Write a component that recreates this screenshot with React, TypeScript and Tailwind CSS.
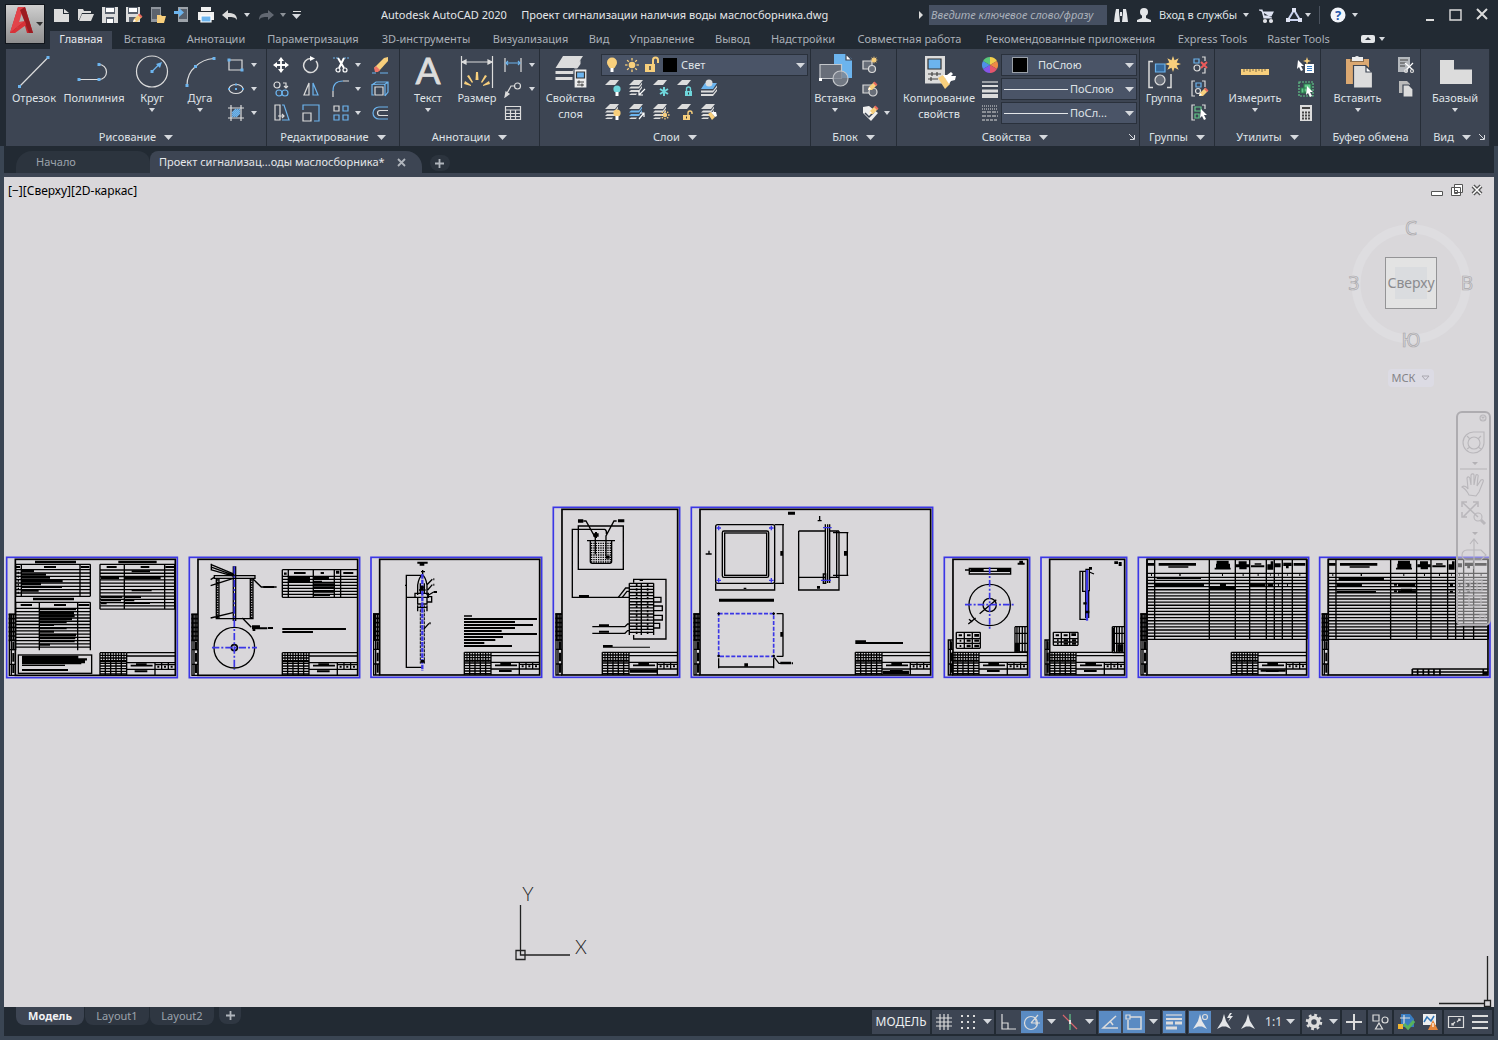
import type { ReactNode } from 'react'

type BarRow = [number, number, number, number?]

const BLUE = '#6cb4ee'
const PAPER = '#dcdcdc'
const GOLD = '#f8cf7c'
const SHEET_BLUE = '#3b36e6'

/* ---------- small shared pieces ---------- */

function Caret({ big = false }: { big?: boolean }) {
  return (
    <svg className="shrink-0" width={big ? 9 : 6} height={big ? 5 : 4} viewBox="0 0 8 4" fill="#d6d9de" preserveAspectRatio="none">
      <path d="M0 0h8L4 4z" />
    </svg>
  )
}

function Ico({ children, size = 18, box = 18 }: { children: ReactNode; size?: number; box?: number }) {
  return (
    <svg className="shrink-0" width={size} height={size} viewBox={`0 0 ${box} ${box}`} fill="none" stroke={PAPER} strokeWidth="1.2">
      {children}
    </svg>
  )
}

function Dots({ pts, r = 3 }: { pts: number[][]; r?: number }) {
  return (
    <>
      {pts.map(([x, y], i) => (
        <rect key={i} x={x - r / 2} y={y - r / 2} width={r} height={r} fill={BLUE} stroke="none" />
      ))}
    </>
  )
}

function Sun({ x, y, r }: { x: number; y: number; r: number }) {
  return (
    <g stroke={GOLD} strokeWidth="1.3">
      <circle cx={x} cy={y} r={r * 0.55} fill={GOLD} stroke="none" />
      {[0, 45, 90, 135, 180, 225, 270, 315].map(a => (
        <path key={a} d={`M${x} ${y - r * 0.75}V${y - r * 1.15}`} transform={`rotate(${a} ${x} ${y})`} />
      ))}
    </g>
  )
}

function Star({ x, y, r }: { x: number; y: number; r: number }) {
  const pts = Array.from({ length: 16 }).map((_, i) => {
    const rad = i % 2 ? r * 0.5 : r
    const a = (i * Math.PI) / 8
    return `${x + rad * Math.sin(a)},${y - rad * Math.cos(a)}`
  })
  return <polygon points={pts.join(' ')} fill={GOLD} stroke="none" />
}

function Pencil({ x, y }: { x: number; y: number }) {
  return (
    <g stroke="none" transform={`translate(${x} ${y})`}>
      <path d="M0 8l1-3 5-5 3 3-5 5z" fill={GOLD} />
      <path d="M5 1l1.500-1.500 3 3L8 4z" fill="#e8695f" />
      <path d="M0 8l1-3 2 2z" fill="#fff" />
    </g>
  )
}

function Lock({ x, y, color, open = false }: { x: number; y: number; color: string; open?: boolean }) {
  return (
    <g>
      <rect x={x} y={y + 4} width="7" height="5" fill={color} stroke="none" />
      <path d={open ? `M${x + 5} ${y + 4}V${y + 2}a2 2 0 0 1 4 0v1` : `M${x + 1.5} ${y + 4}V${y + 2}a2 2 0 0 1 4 0v2`} stroke={color} strokeWidth="1.400" />
      <path d={`M${x + 3.5} ${y + 5.5}v2`} stroke="#333" strokeWidth="1" />
    </g>
  )
}

function Bulb({ x, y, color }: { x: number; y: number; color: string }) {
  return (
    <g stroke="none">
      <circle cx={x} cy={y} r="3.600" fill={color} />
      <rect x={x - 1.5} y={y + 3} width="3" height="4" fill="#fff" />
    </g>
  )
}

function Pointer({ x, y }: { x: number; y: number }) {
  return <path d={`M${x} ${y}l6 6h-3l2 4-2 1-2-4-2 2z`} fill="#fff" stroke="none" />
}

function Layers({ n = 3, mid = PAPER }: { n?: number; mid?: string }) {
  return (
    <g stroke="none">
      <path d="M6 1h9l-4 5H1z" fill={PAPER} />
      {n > 1 && <path d="M3 7.500h8l3-4v2L11 9.500H1z" fill={mid} />}
      {n > 2 && <path d="M3 11h8l3-4v2L11 13H1z" fill={mid} />}
      {n > 2 && <path d="M3 14.500h6l-1 1.500H1z" fill={PAPER} />}
    </g>
  )
}

/* ---------- ribbon building blocks ---------- */

function Big({ label, width, caret, children }: { label: ReactNode; width: string; caret?: boolean; children: ReactNode }) {
  return (
    <button className={`flex shrink-0 flex-col items-center pt-[5px] ${width}`}>
      <svg className="overflow-visible" width="36" height="36" viewBox="0 0 36 36" fill="none" stroke={PAPER} strokeWidth="1.200">{children}</svg>
      <span className="whitespace-nowrap leading-4">{label}</span>
      {caret && <span className="mt-0.5"><Caret /></span>}
    </button>
  )
}

function Stack({ width, children }: { width: string; children: ReactNode }) {
  return <div className={`grid shrink-0 auto-rows-[24px] content-start justify-items-center pt-1 ${width}`}>{children}</div>
}

function Tool({ name, children }: { name: string; children: ReactNode }) {
  return (
    <button aria-label={name} className="flex h-6 items-center justify-center">
      <Ico>{children}</Ico>
    </button>
  )
}

function Drop({ name }: { name: string }) {
  return (
    <button aria-label={name} className="flex h-6 items-center">
      <Caret />
    </button>
  )
}

function Panel({ title, width, caret = true, launcher, children }: { title: string; width: string; caret?: boolean; launcher?: boolean; children: ReactNode }) {
  return (
    <section className={`flex grow flex-col border-r border-[#262d37] bg-[#3d4553] ${width}`}>
      <div className="flex h-[79px]">{children}</div>
      <div className="flex h-[18px] items-center px-1">
        <button className="flex grow items-center justify-center gap-2 whitespace-nowrap leading-4">
          {title}
          {caret && <Caret big />}
        </button>
        {launcher && (
          <button aria-label={`${title}: параметры`}>
            <svg width="6" height="6" viewBox="0 0 6 6" stroke="#d6d9de" fill="none"><path d="M0 0l5 5M5.500 1v4.500H1" /></svg>
          </button>
        )}
      </div>
    </section>
  )
}

function QuickIcon({ name, width, children }: { name: string; width: string; children: ReactNode }) {
  return (
    <button aria-label={name} className={`flex shrink-0 justify-center ${width}`}>
      <Ico>{children}</Ico>
    </button>
  )
}

const MENU: [string, string][] = [
  ['Вставка', 'w-[65px]'],
  ['Аннотации', 'w-[78px]'],
  ['Параметризация', 'w-[116px]'],
  ['3D-инструменты', 'w-[110px]'],
  ['Визуализация', 'w-[99px]'],
  ['Вид', 'w-[38px]'],
  ['Управление', 'w-[88px]'],
  ['Вывод', 'w-[53px]'],
  ['Надстройки', 'w-[88px]'],
  ['Совместная работа', 'w-[125px]'],
  ['Рекомендованные приложения', 'w-[197px]'],
  ['Express Tools', 'w-[87px]'],
  ['Raster Tools', 'w-[85px]'],
]

function Header() {
  return (
    <header className="flex h-[49px] pl-[5px]">
      <button aria-label="Меню приложения" className="mt-1 flex h-10 w-10 shrink-0 items-center border border-[#11161c] bg-gradient-to-b from-[#cfcfcf] to-[#8f8f8f]">
        <svg width="38" height="38" viewBox="0 0 38 38">
          <path d="M4 28l8-26h7l8 26h-6l-2-7-8 1-2 6z" fill="#c4272d" />
          <path d="M12 2h7l-6 15 6-1-8 6-7 6z" fill="#e2444a" />
          <path d="M16 8l3 8-6 1z" fill="#b5b5b5" />
          <path d="M19 2l8 26h-4L14 5z" fill="#9c1b21" />
          <path d="M4 28l15-12 1 4-11 8z" fill="#d83238" />
          <path d="M30 17h7l-3 4z" fill="#333" />
        </svg>
      </button>
      <div className="flex min-w-0 grow flex-col">
        <div className="flex h-[31px] items-center pb-0.5">
          <div className="flex w-[336px] shrink-0 items-center pl-[5px]">
            <QuickIcon name="Создать" width="w-6"><path d="M1 3h9v5h6v8H1zM11 3l5 4h-5z" fill={PAPER} stroke="none" /></QuickIcon>
            <QuickIcon name="Открыть" width="w-6"><path d="M1 3h5l1 2h7v2H5L2 14H1zM5 8h12l-3 7H2z" fill={PAPER} stroke="none" /></QuickIcon>
            <QuickIcon name="Сохранить" width="w-6">
              <path d="M1 1h16v16H1z" fill={PAPER} stroke="none" /><path d="M4 1h10v7H4zM5 11h8v6H5z" fill="#59616d" stroke="none" /><path d="M5 2h8v4H5zM6 13h6v4H6z" fill="#fff" stroke="none" />
            </QuickIcon>
            <QuickIcon name="Сохранить как" width="w-6">
              <path d="M1 1h14v15H1z" fill={PAPER} stroke="none" /><path d="M3 1h10v7H3zM4 11h7v5H4z" fill="#59616d" stroke="none" /><path d="M4 2h8v4H4z" fill="#fff" stroke="none" /><Pencil x={8} y={8} />
            </QuickIcon>
            <QuickIcon name="Открыть из веб" width="w-6">
              <path d="M2 1h10v15H2z" fill="#8e949c" stroke="none" /><path d="M3 3h8v10H3z" fill="#5c636e" stroke="none" /><path d="M8 9h4l1 1h4l-2 7H8z" fill={GOLD} stroke="none" />
            </QuickIcon>
            <QuickIcon name="Сохранить в веб" width="w-6">
              <path d="M5 1h10v15H5z" fill="#9da3aa" stroke="none" /><path d="M6 3h8v10H6z" fill="#59616d" stroke="none" /><path d="M1 5h5V2l5 4.500L6 11V8H1z" fill={BLUE} stroke="none" />
            </QuickIcon>
            <QuickIcon name="Печать" width="w-6">
              <path d="M1 6h16v8H1zM4 1h10v4H4z" fill="#f0f0f0" stroke="none" /><path d="M4 10h10v6H4z" fill={BLUE} stroke="#fff" />
            </QuickIcon>
            <QuickIcon name="Отменить" width="w-6"><path d="M1 9l6-5v3c5 0 9 1 9 7-2-3-4-3-9-3v3z" fill={PAPER} stroke="none" /></QuickIcon>
            <button aria-label="Список отмены" className="w-3 pl-0.5"><Caret /></button>
            <QuickIcon name="Повторить" width="w-6"><path d="M17 9l-6-5v3c-5 0-9 1-9 7 2-3 4-3 9-3v3z" fill="#626872" stroke="none" /></QuickIcon>
            <button aria-label="Список повтора" className="w-3.5 pl-0.5 opacity-60"><Caret /></button>
            <button aria-label="Настройка панели" className="flex flex-col items-center gap-0.5"><span className="h-px w-2 bg-[#dcdcdc]" /><Caret big /></button>
          </div>
          <h1 className="min-w-0 grow truncate whitespace-pre text-[#e4e6e9]">Autodesk AutoCAD 2020{'     '}Проект сигнализации наличия воды маслосборника.dwg</h1>
          <svg className="mr-1.5 shrink-0" width="4" height="8" viewBox="0 0 4 8" fill="#dcdcdc"><path d="M0 0l4 4-4 4z" /></svg>
          <input aria-label="Поиск" placeholder="Введите ключевое слово/фразу" className="h-5 w-[178px] shrink-0 bg-[#465062] px-0.5 italic placeholder:text-[#aab1bb]" />
          <div className="flex w-[391px] shrink-0 items-center">
            <QuickIcon name="Найти" width="w-[28px]"><path d="M4 3h3v3l1 10H2l1-8zM11 3h3l1 5 1 8h-6l1-10zM8 6h2v4H8z" fill="#e4e6e9" stroke="none" /></QuickIcon>
            <button className="flex items-center gap-1.5 whitespace-nowrap">
              <Ico><circle cx="9" cy="6" r="4" fill="#e4e6e9" stroke="none" /><path d="M7 9h4v3l5 2v2H2v-2l5-2z" fill="#e4e6e9" stroke="none" /></Ico>
              Вход в службы
              <Caret />
            </button>
            <QuickIcon name="Магазин" width="w-[34px]"><path d="M2 4h3l2 8h8M6 6h10l-2 4H7z" fill="#dfe3f3" stroke="#dfe3f3" /><circle cx="8" cy="15" r="1.500" fill="#dfe3f3" /><circle cx="14" cy="15" r="1.500" fill="#dfe3f3" /></QuickIcon>
            <QuickIcon name="Сообщество" width="w-[22px]"><path d="M9 4l6 10H3z" strokeWidth="2" stroke="#c9d2ee" /><path d="M7 2h4v4H7zM1 12h4v4H1zM13 12h4v4h-4z" fill="#dfe3f3" stroke="none" /></QuickIcon>
            <Caret />
            <span className="mx-2 h-[18px] w-px bg-[#4a525e]" />
            <QuickIcon name="Справка" width="w-5">
              <circle cx="9" cy="9" r="7.500" fill="#f2f5fb" stroke="none" />
              <text x="9" y="14" textAnchor="middle" fontSize="13" fontWeight="bold" fill="#2459ad" stroke="none">?</text>
            </QuickIcon>
            <button aria-label="Меню справки" className="pl-1"><Caret /></button>
            <div className="ml-auto flex items-center gap-2 pr-[7px]">
              <QuickIcon name="Свернуть" width="w-[18px]"><path d="M5 14h8" strokeWidth="2" /></QuickIcon>
              <QuickIcon name="Развернуть" width="w-[18px]"><path d="M3 4h11v10H3z" strokeWidth="1.400" /></QuickIcon>
              <QuickIcon name="Закрыть" width="w-[18px]"><path d="M4 3l10 10M14 3L4 13" strokeWidth="2" /></QuickIcon>
            </div>
          </div>
        </div>
        <nav className="flex h-[18px] items-center pl-[5px] text-[#aab0b8]">
          <button className="h-[18px] w-[62px] bg-[#3d4553] pb-0.5 text-[#e8eaed]">Главная</button>
          {MENU.map(([label, w]) => (
            <button key={label} className={`h-[18px] shrink-0 whitespace-nowrap pb-0.5 ${w}`}>{label}</button>
          ))}
          <button aria-label="Свернуть ленту" className="flex items-center gap-1 pb-0.5 pl-5">
            <svg width="14" height="8" viewBox="0 0 14 8"><rect width="14" height="8" rx="2" fill="#e4e6e9" /><path d="M4 5h6L7 2z" fill="#30363f" /></svg>
            <Caret />
          </button>
        </nav>
      </div>
    </header>
  )
}

function Select({ name, value, className, children }: { name: string; value: string; className: string; children: ReactNode }) {
  return (
    <div className="flex h-[22px] items-center border border-[#2a313c] bg-[#4a5467] pr-0.5">
      {children}
      <select aria-label={name} className={`min-w-0 grow appearance-none overflow-hidden bg-transparent ${className}`}>
        <option>{value}</option>
      </select>
      <span className="pointer-events-none"><Caret big /></span>
    </div>
  )
}

function Ribbon() {
  return (
    <div className="mx-1.5 mr-2 flex">
      <Panel title="Рисование" width="w-[261px]">
        <Big label="Отрезок" width="w-14"><path d="M3.500 32.500L32 3.500" /><Dots pts={[[3.5, 32.5], [32, 3.5]]} /></Big>
        <Big label="Полилиния" width="w-[64px]" ><path d="M3 25.500h20a7.500 7.500 0 0 0 0-15" /><Dots pts={[[3, 25.5], [23, 25.5], [23, 10.5]]} /></Big>
        <Big label="Круг" width="w-[52px]" caret>
          <circle cx="18" cy="17.500" r="15.500" /><path d="M18 17.500l8-8" stroke={BLUE} /><path d="M28 8l-6 2 4 4z" fill={BLUE} stroke="none" /><Dots pts={[[18, 17.5]]} />
        </Big>
        <Big label="Дуга" width="w-11" caret><path d="M5 31.500C5 23 8 17 13.500 12.500 19 7 25 5 32 4.500" /><Dots pts={[[5, 31.5], [13.5, 12.5], [32, 4.5]]} /></Big>
        <Stack width="w-7">
          <Tool name="Прямоугольник"><path d="M2 4h13v10H2z" /><Dots pts={[[2, 4], [15, 14]]} /></Tool>
          <Tool name="Эллипс"><ellipse cx="9" cy="9" rx="7" ry="4.500" /><Dots pts={[[9, 9], [2, 9], [9, 4.5], [16, 9]]} r={2} /></Tool>
          <Tool name="Штриховка"><path d="M4 1v16M14 1v16M1 4h16M1 14h16" /><path d="M5 9l4-4M5 13l8-8M9 13l4-4M7 13l6-6M5 11l6-6" stroke={BLUE} /></Tool>
        </Stack>
        <Stack width="w-2"><Drop name="Прямоугольники" /><Drop name="Эллипсы" /><Drop name="Штриховки" /></Stack>
      </Panel>

      <Panel title="Редактирование" width="w-[133px]">
        <Stack width="w-7">
          <Tool name="Перенести"><path d="M9 3v12M3 9h12" strokeWidth="1.800" stroke="#fff" /><path d="M9 1l3 4H6zM9 17l3-4H6zM1 9l4-3v6zM17 9l-4-3v6z" fill="#fff" stroke="none" /></Tool>
          <Tool name="Копировать"><circle cx="5" cy="5" r="3" /><path d="M11 3h3v4M12 6l2 2 2-2" /><circle cx="7" cy="13" r="3" stroke={BLUE} /><circle cx="13" cy="13" r="3" stroke={BLUE} /></Tool>
          <Tool name="Растянуть"><path d="M3 1h5v15H3zM6 12h6M10 10l2 2-2 2" /><path d="M10 1h2l5 15h-7" stroke={BLUE} /></Tool>
        </Stack>
        <Stack width="w-8">
          <Tool name="Повернуть"><path d="M14 5a7 7 0 1 1-5-2.500" strokeWidth="1.500" /><path d="M8 0l5 2.500L8 5z" fill="#fff" stroke="none" /></Tool>
          <Tool name="Зеркало"><path d="M7 3v12H2z" /><path d="M11 3v12h5z" stroke={BLUE} /></Tool>
          <Tool name="Масштаб"><path d="M1 9h8v8H1z" /><path d="M1 6V1h16v16h-5" stroke={BLUE} /></Tool>
        </Stack>
        <Stack width="w-7">
          <Tool name="Обрезать"><path d="M1 2h5M12 2h5" stroke={BLUE} strokeDasharray="2 1" /><path d="M6 2l6 10M12 2L7 12" stroke="#fff" strokeWidth="2" /><circle cx="6" cy="14" r="2" stroke="#fff" /><circle cx="13" cy="14" r="2" stroke="#fff" /></Tool>
          <Tool name="Сопряжение"><path d="M1 17v-6M11 1h6" /><path d="M1 11Q1 1 11 1" stroke={BLUE} /></Tool>
          <Tool name="Массив"><path d="M2 2h5v5H2z" /><path d="M11 2h5v5h-5zM2 11h5v5H2zM11 11h5v5h-5z" stroke={BLUE} /></Tool>
        </Stack>
        <Stack width="w-1.5"><Drop name="Обрезка" /><Drop name="Сопряжения" /><Drop name="Массивы" /></Stack>
        <Stack width="w-[38px]">
          <Tool name="Стереть"><path d="M3 12L13 2l4-1v4L8 15z" fill={GOLD} stroke="none" /><path d="M3 12l2-2 4 4-2 2H4z" fill="#ee7468" stroke="none" /><path d="M1 17h4M9 17h8" stroke={BLUE} /></Tool>
          <Tool name="Расчленить"><path d="M4 7h8v8H4z" /><path d="M1 5l4-3h12v10l-3 4M14 4L1 4.500V15h2M14 5v11M13 5l4-3" stroke={BLUE} /></Tool>
          <Tool name="Подобие"><path d="M17 3H8a6 6 0 0 0 0 12h9" stroke={BLUE} /><path d="M17 6.500H9a2.500 2.500 0 0 0 0 5h8" /></Tool>
        </Stack>
      </Panel>

      <Panel title="Аннотации" width="w-[140px]">
        <Big label="Текст" width="w-14" caret><text className="font-['Lato',sans-serif]" x="18" y="30" textAnchor="middle" fontSize="37" fill={PAPER} stroke={PAPER} strokeWidth="0.800">A</text></Big>
        <Big label="Размер" width="w-[42px]">
          <path d="M2.500 2v32M33.500 2v32M3 8h30" /><path d="M3 8l4-2v4zM33 8l-4-2v4z" fill={PAPER} />
          <path d="M17 18h2l.5 8h-3zM8 22l2-1 4 7-1 1zM28 22l-2-1-4 7 1 1zM5 30l1-3 6 4v1zM31 30l-1-3-6 4v1z" fill={GOLD} stroke="none" />
        </Big>
        <Stack width="w-[30px]">
          <Tool name="Линейный"><path d="M1 2v14M17 2v14" /><path d="M2 7h14M4 5L2 7l2 2M14 5l2 2-2 2" stroke={BLUE} /></Tool>
          <Tool name="Выноска"><path d="M2 15L7 6h4" /><circle cx="13.500" cy="6" r="3" /><path d="M1 17l1-5 3 2z" fill={PAPER} /></Tool>
          <Tool name="Таблица"><path d="M1.500 2.500h15v13h-15zM1.500 6h15M1.500 9.500h15M1.500 12.500h15M6.500 6v9.500M11.500 6v9.500" /></Tool>
        </Stack>
        <Stack width="w-2"><Drop name="Размеры" /><Drop name="Выноски" /></Stack>
      </Panel>

      <Panel title="Слои" width="w-[271px]">
        <Big label={<>Свойства<br />слоя</>} width="w-[61px]">
          <path d="M10 2h20l-8 12H2.500zM2.500 17h17l8-11v4l-7 10H2.500zM2.500 23h17v3h-17z" fill={PAPER} stroke="none" />
          <path d="M21 15h13v19H21z" fill="#eee" stroke="#3d4553" /><path d="M23.500 18h8v6h-8z" fill={BLUE} stroke="#333" /><path d="M24 28h7M24 31h7M26 26.500v3M29 29.500v3" stroke="#444" />
        </Big>
        <div className="grow pr-0.5 pt-[5px]">
          <Select name="Слой" value="Свет" className="pl-1">
            <span className="flex items-center gap-px pl-0.5">
              <Ico><Bulb x={8} y={9} color={GOLD} /><circle cx="8" cy="6.500" r="5" fill={GOLD} stroke="none" /></Ico>
              <Ico><Sun x={9} y={9} r={6} /></Ico>
              <Ico><path d="M3 8h10v8H3z" fill={GOLD} stroke="none" /><path d="M11 8V4a2.500 2.500 0 0 1 5 0v3" stroke={GOLD} strokeWidth="2" /><path d="M8 10v4" stroke="#444" strokeWidth="1.500" /></Ico>
              <span className="ml-0.5 h-3.5 w-3.5 bg-black" />
            </span>
          </Select>
          <div className="grid w-[120px] grid-cols-5 justify-items-center">
            <Tool name="Отключить слой"><Layers n={1} /><Bulb x={13} y={10} color="#6fd6dc" /></Tool>
            <Tool name="Изолировать"><Layers /><path d="M17 10l-6 6M11 12v4h4" stroke="#fff" /></Tool>
            <Tool name="Заморозить"><Layers n={1} /><path d="M12 8v9M8 10l8 5M16 10l-8 5" stroke="#6fd6dc" strokeWidth="2" /></Tool>
            <Tool name="Блокировать"><Layers n={1} /><Lock x={9} y={8} color="#6fd6dc" /></Tool>
            <Tool name="Сделать текущим"><path d="M5 4h12l-4 6H1z" fill={BLUE} stroke="none" /><path d="M1 11.500h12l4-5v2l-4 5H1zM1 15h12l4-5v2l-4 5H1z" fill={PAPER} stroke="none" /><circle cx="9" cy="4" r="3.500" fill={PAPER} stroke="none" /></Tool>
            <Tool name="Включить все"><Layers /><Bulb x={13} y={10} color={GOLD} /></Tool>
            <Tool name="Отменить изоляцию"><Layers mid={BLUE} /><path d="M11 16l5-6M12 10h4v4" stroke="#fff" /></Tool>
            <Tool name="Разморозить"><Layers /><Sun x={13} y={12} r={4} /></Tool>
            <Tool name="Разблокировать"><Layers n={1} /><Lock x={7} y={8} color={GOLD} open /></Tool>
            <Tool name="Копировать слой"><Layers /><path d="M8 11l3-2 4 5-3 3z" fill={GOLD} stroke="none" /><path d="M11 9l5 0 1 4-2 1z" fill="#fff" stroke="none" /></Tool>
          </div>
        </div>
      </Panel>

      <Panel title="Блок" width="w-[86px]">
        <Big label="Вставка" width="w-12" caret>
          <path d="M17 0h12l6 5v19H17z" fill={BLUE} stroke="none" /><path d="M29 0v6h6z" fill="#fff" stroke="#3d4553" />
          <path d="M3 10.500h21.500v14H3z" fill="#686e79" stroke="#c3c6ca" /><circle cx="23.500" cy="24.500" r="7.500" fill="#7e8590" fillOpacity="0.800" stroke="#c3c6ca" /><path d="M2 24h3v3H2z" fill="#fff" stroke="none" />
        </Big>
        <Stack width="w-[22px]">
          <Tool name="Создать блок"><path d="M2 5h9v8H2z" fill="#686e79" /><circle cx="11" cy="13" r="3.500" fill="#686e79" /><Star x={13} y={4} r={4} /></Tool>
          <Tool name="Редактор блоков"><path d="M2 5h9v8H2z" fill="#686e79" /><circle cx="12" cy="12" r="4" fill="#686e79" /><Pencil x={7} y={2} /></Tool>
          <Tool name="Атрибуты"><path d="M2 3l6-1 9 7-7 8L2 9z" fill="#eee" stroke="none" /><path d="M4 9l4 4 5-5" stroke="#3d4553" strokeWidth="1.500" /><Pencil x={8} y={2} /></Tool>
        </Stack>
        <Stack width="w-3"><span /><span /><Drop name="Атрибуты блока" /></Stack>
      </Panel>

      <Panel title="Свойства" width="w-[243px]" launcher>
        <Big label={<>Копирование<br />свойств</>} width="w-[84px]">
          <path d="M4 2h20v27.500H4z" fill={PAPER} stroke="none" /><path d="M7 5h13v10H7z" fill={BLUE} stroke="#333" /><path d="M7 20h13M7 25h10M11 18v4M16 18v4M10 23v4" stroke="#444" />
          <path d="M17 24l5-3 7 9-5 5z" fill={GOLD} stroke="none" /><path d="M22 21l4 0 4-3 2 2-2 2h5l-1 4-4 1-2 3z" fill="#fff" stroke="none" />
        </Big>
        <Stack width="w-[18px]">
          <Tool name="Цвет">
            <g stroke="none">
              {['#f2cf4b', '#ee8b45', '#e5566d', '#8655e8', '#4f8fe6', '#59c67a'].map((c, i) => (
                <path key={c} d="M9 9V1a8 8 0 0 1 6.930 4z" fill={c} transform={`rotate(${i * 60} 9 9)`} />
              ))}
            </g>
          </Tool>
          <Tool name="Вес линий"><path d="M1 2h16" /><path d="M1 6h16" strokeWidth="2" /><path d="M1 11h16" strokeWidth="3" /><path d="M1 16h16" strokeWidth="4" /></Tool>
          <Tool name="Тип линий"><path d="M1 2h16M1 5h16" strokeDasharray="1 1" /><path d="M1 8h16M1 12h16" strokeDasharray="4 1" /><path d="M1 16h16" strokeDasharray="3 1" /></Tool>
        </Stack>
        <div className="flex grow flex-col gap-0.5 pl-0.5 pr-0.5 pt-[5px]">
          <Select name="Цвет объекта" value="ПоСлою" className="pl-2.5"><span className="ml-2.5 h-4 w-4 shrink-0 border border-[#9aa0a8] bg-black" /></Select>
          <Select name="Вес линий объекта" value="ПоСлою" className=""><span className="ml-0.5 mr-0.5 h-px w-16 shrink-0 bg-[#e4e6e9]" /></Select>
          <Select name="Тип линий объекта" value="ПоСл..." className=""><span className="ml-0.5 mr-0.5 h-px w-16 shrink-0 bg-[#e4e6e9]" /></Select>
        </div>
      </Panel>

      <Panel title="Группы" width="w-[75px]">
        <Big label="Группа" width="w-12">
          <path d="M7 7.500H3v26h4M21 33.500h4V20" strokeWidth="1.500" /><path d="M9.500 10h9.500v8H9.500z" fill="#35689a" stroke={BLUE} /><circle cx="14" cy="26" r="5" fill="#686e79" /><Star x={27} y={10} r={8} />
        </Big>
        <Stack width="w-6">
          <Tool name="Разгруппировать"><path d="M3 3h5v4H3z" stroke={BLUE} /><circle cx="6" cy="12" r="3" /><path d="M11 1h3v4M14 12v5h-3" /><path d="M10 6l6 6M16 6l-6 6" stroke="#ee5a5a" strokeWidth="2" /></Tool>
          <Tool name="Редактировать группу"><path d="M4 1H1v15h3M11 1h3v6" /><path d="M5 3h5v4H5z" stroke={BLUE} /><circle cx="7" cy="11" r="2.500" /><Pencil x={8} y={8} /></Tool>
          <Tool name="Выбор группы"><path d="M4 1H1v15h3M11 1h3v4" /><path d="M4 3h6v4H4zM4 10h4v4H4z" stroke="#63c98a" /><Pointer x={10} y={5} /></Tool>
        </Stack>
      </Panel>

      <Panel title="Утилиты" width="w-[106px]">
        <Big label="Измерить" width="w-20" caret>
          <path d="M4 15h28v6H4z" fill={GOLD} stroke="none" /><path d="M7 15v3M10 15v2M13 15v3M16 15v2M19 15v3M22 15v2M25 15v3M28 15v2" stroke="#7c6a44" strokeWidth="1" />
        </Big>
        <Stack width="w-[22px]">
          <Tool name="Быстрый выбор"><path d="M8 8h9v9H8z" fill="#fff" stroke="none" /><path d="M10 10.500h5M10 12.500h5M10 14.500h5" stroke="#3b7ec4" /><path d="M10 1l1 3 3 1-3 1-1 3-1-3-3-1 3-1z" fill={GOLD} stroke="none" /><Pointer x={1} y={4} /></Tool>
          <Tool name="Выбрать все"><path d="M2 2h14v14H2z" stroke="#63c98a" strokeDasharray="2 1" /><path d="M7 4h7v8H7zM4 8h6v5H4z" fill="#63c98a" stroke="#2d7a4e" /><Pointer x={10} y={6} /></Tool>
          <Tool name="Калькулятор"><path d="M3 1h12v16H3z" fill={PAPER} stroke="none" /><path d="M5 4h8" stroke="#444" strokeWidth="2" /><path d="M5 8.500h8M5 11.500h8M5 14.500h8" stroke="#444" strokeWidth="2" strokeDasharray="2 1" /></Tool>
        </Stack>
      </Panel>

      <Panel title="Буфер обмена" width="w-[100px]" caret={false}>
        <Big label="Вставить" width="w-[73px]" caret>
          <path d="M6 5h23v25H6z" fill="#dba871" stroke="none" /><path d="M10 5h14v3H10z" fill="#8d6e4d" stroke="none" /><path d="M12 3h3a2.500 2.500 0 0 1 4 0h4v4H12z" fill="#eee" stroke="none" />
          <path d="M13.500 11.500h12l7 6.500v16h-19z" fill={PAPER} stroke="#3d4553" /><path d="M26 12v6h6z" fill="#fff" stroke="#3d4553" />
        </Big>
        <Stack width="w-[24px]">
          <Tool name="Вырезать"><path d="M1 1h12v8l-3 7H1z" fill="#b4b8bd" stroke="none" /><path d="M3 4h8M3 7h6M3 10h5" stroke="#444" /><path d="M8 7l8 7M16 7l-7 7" stroke="#fff" /><circle cx="9" cy="15" r="1.500" /><circle cx="15" cy="15" r="1.500" /></Tool>
          <Tool name="Копировать в буфер"><path d="M2 1h8l3 3v9H2z" fill="#bbb" stroke="none" /><path d="M6 5h6l4 4v8H6z" fill={PAPER} stroke="#3d4553" /></Tool>
        </Stack>
      </Panel>

      <Panel title="Вид" width="w-[69px]" launcher>
        <Big label="Базовый" width="w-[68px]" caret><path d="M3 6h14v9.500h18V30H3z" fill={PAPER} stroke="none" /></Big>
      </Panel>
    </div>
  )
}

function FileTabs() {
  return (
    <div className="flex h-[31px] items-end border-b-4 border-[#3d4553] pl-3">
      <button className="h-[22px] w-[134px] rounded-tl-2xl rounded-tr-xl bg-[#2c343e] pl-5 text-left text-[#9ca3ac]">Начало</button>
      <div className="flex h-[22px] items-center gap-3 rounded-tl-lg rounded-tr-2xl bg-[#3d4553] pl-[9px] pr-4 text-[#e4e6e9]">
        <button className="whitespace-nowrap">Проект сигнализац...оды маслосборника*</button>
        <button aria-label="Закрыть вкладку">
          <svg width="9" height="9" viewBox="0 0 9 9" stroke="#b0b5bc" strokeWidth="1.800"><path d="M1 1l7 7M8 1L1 8" /></svg>
        </button>
      </div>
      <button aria-label="Новый чертеж" className="mb-0.5 ml-2 flex h-4 w-5 items-center justify-center rounded-full bg-[#2c343e]">
        <svg width="9" height="9" viewBox="0 0 9 9" stroke="#b0b5bc" strokeWidth="1.800"><path d="M4.500 0v9M0 4.500h9" /></svg>
      </button>
    </div>
  )
}

/* ---------- drawing sheets; one sheet unit is a third of a screen unit ---------- */

const rows = (x1: number, x2: number, ys: number[]) => ys.map(y => `M${x1} ${y}H${x2}`).join('')
const cols = (y1: number, y2: number, xs: number[]) => xs.map(x => `M${x} ${y1}V${y2}`).join('')
const steps = (from: number, to: number, step: number) => {
  const out: number[] = []
  for (let v = from; v <= to + 0.01; v += step) out.push(v)
  return out
}

function Bars({ data }: { data: BarRow[] }) {
  return <path stroke="none" fill="#000" d={data.map(([x1, x2, y, h = 6]) => `M${x1} ${y - h / 2}H${x2}v${h}H${x1}z`).join('')} />
}

function Stamp({ x, y }: { x: number; y: number }) {
  return (
    <g transform={`translate(${x} ${y})`}>
      <path d={rows(0, 80, steps(0, 68, 8)) + cols(0, 68, steps(0, 80, 16))} />
      <path d={rows(80, 226, [0, 10, 30, 50]) + cols(30, 68, [165]) + cols(30, 50, [185, 205]) + rows(165, 226, [36])} />
      <path d={cols(0, 28, [8, 24, 40, 56, 72])} strokeWidth="3" />
      <Bars data={[[0, 80, 26, 5], [108, 140, 35], [92, 158, 39, 5], [104, 142, 56, 6], [172, 178, 42], [192, 198, 42], [212, 218, 42]]} />
    </g>
  )
}

function Sheet({ x, y, w, h, stamp = true, narrow = false }: { x: number; y: number; w: number; h: number; stamp?: boolean; narrow?: boolean }) {
  const b = y + h
  const top = narrow ? b - 112 : b - 190
  const left = narrow ? x + 10 : x + 6
  return (
    <g>
      <rect x={x} y={y} width={w} height={h} stroke={SHEET_BLUE} strokeWidth="5" />
      <rect x={x + 26} y={y + 6} width={w - 32} height={h - 13} strokeWidth="5" />
      <path d={rows(left, x + 26, [top, b - 112, b - 84, b - 40, b - 7]) + cols(top, b - 7, [left + 2, left + 8])} strokeWidth="4" />
      {!narrow && <path d={rows(left, x + 26, steps(top, b - 112, 13)) + cols(top, b - 112, [x + 10, x + 20])} strokeWidth="5" />}
      <path d={cols(b - 108, b - 10, [x + 20])} strokeWidth="6" strokeDasharray="26 8" />
      {stamp && <Stamp x={x + w - 232} y={b - 75} />}
    </g>
  )
}

const SPEC_COLS = [351, 374, 538, 616, 659, 709, 733, 757, 787, 831]

function SpecTable() {
  return (
    <>
      <path d={rows(351, 831, [28, 70, ...steps(82, 268, 9.3)]) + cols(28, 268, SPEC_COLS)} />
      <Bars
        data={[
          [352, 373, 43, 8], [386, 498, 43, 8], [415, 475, 51, 5], [560, 596, 38, 12], [558, 600, 48, 14], [554, 602, 56, 5],
          [626, 650, 40, 12], [618, 658, 47, 9], [628, 650, 55, 6], [674, 694, 42, 5], [663, 703, 49, 6], [712, 730, 51, 16], [722, 730, 40, 12],
          [735, 752, 46, 12], [760, 785, 43, 10], [768, 776, 51, 8], [791, 826, 43, 8], [363, 366, 75], [448, 452, 75], [576, 579, 75], [638, 641, 75],
          [683, 686, 75], [720, 722, 75], [744, 746, 75], [771, 773, 75], [808, 811, 75],
        ]}
      />
    </>
  )
}

function Drawing() {
  return (
    <svg className="absolute inset-0 h-full w-full" viewBox="4 177 1490 830" fill="none" stroke="#000" strokeWidth="4" preserveAspectRatio="xMidYMid meet">
      <g transform="translate(0 545) scale(0.3333)">
        <Sheet x={20} y={37} w={512} h={361} />
        <path d={rows(47, 271, [58, ...steps(74, 154, 10)]) + cols(58, 154, [47, 64, 240, 271])} />
        <path d={rows(47, 271, [172, ...steps(190, 316, 9.7)]) + cols(172, 316, [47, 118, 233, 271])} />
        <path d={rows(300, 526, [58, ...steps(75, 193, 9.8)]) + cols(58, 193, [300, 373, 494, 524])} />
        <rect x="55" y="330" width="220" height="55" />
        <Bars
          data={[
            [105, 228, 51, 7], [355, 470, 51, 7], [99, 222, 162, 7], [48, 60, 66], [132, 168, 66], [242, 268, 66], [320, 350, 66], [422, 448, 66], [496, 522, 66],
            [65, 102, 78], [65, 138, 89, 7], [65, 150, 98, 7], [65, 188, 108, 7], [65, 123, 117, 7], [65, 186, 127, 4], [65, 116, 137, 7],
            [62, 96, 180], [162, 198, 180], [235, 268, 180],
            [119, 228, 193], [119, 222, 203, 8], [119, 224, 212, 8], [119, 216, 222, 8], [119, 200, 231, 7], [119, 162, 240], [119, 200, 250], [119, 162, 260],
            [119, 228, 270, 7], [119, 226, 279, 7], [119, 224, 289, 6], [119, 150, 299],
            [66, 235, 337, 9], [66, 261, 343, 7], [66, 255, 350, 9], [66, 244, 355, 6], [66, 195, 361, 4], [66, 204, 375, 6],
            [395, 450, 79], [303, 357, 99], [375, 482, 99, 7], [395, 455, 136], [303, 367, 156], [375, 423, 156], [303, 363, 166], [375, 403, 166], [303, 320, 175, 5], [375, 450, 175, 4],
          ]}
        />
        <path d={cols(80, 150, [55])} strokeDasharray="6 6" />

        <Sheet x={568} y={37} w={511} h={361} />
        <path d="M643 92h122v8H643zM649 101h8v120h-8zM751 101h8v120h-8zM649 221h110M632 58l72 30M632 66l72 26M632 74l70 20M634 56v20M632 104l12-8M632 122l68-22M632 219l70-17M757 100l27 26h46M727 219l27 28" />
        <path d="M653 101v120M755 101v120" strokeDasharray="3 2" strokeWidth="6" />
        <circle cx="703" cy="308" r="61" />
        <circle cx="703" cy="308" r="9" strokeWidth="5" />
        <path d="M700 66h7v160h-7z" />
        <path d="M703 64v310M636 308h135" stroke={SHEET_BLUE} strokeWidth="5" strokeDasharray="22 6 6 6" />
        <path d={rows(847, 1073, [74, ...steps(94, 157, 9)]) + cols(74, 157, [847, 865, 940, 1003, 1022])} />
        <Bars
          data={[
            [790, 822, 126], [756, 780, 245, 8], [756, 802, 250], [804, 819, 249], [758, 766, 255], [847, 1038, 252, 6], [847, 939, 261, 6],
            [852, 860, 86, 7], [882, 917, 84], [962, 972, 84], [1008, 1018, 82, 9], [1030, 1060, 84], [866, 930, 99], [866, 930, 108], [941, 987, 99],
            [941, 966, 110], [941, 1002, 119, 8], [941, 1002, 128, 8], [941, 1002, 139, 8], [941, 990, 150],
          ]}
        />
      </g>

      <g transform="translate(365 500) scale(0.3333)">
        <Sheet x={18} y={172} w={512} h={360} />
        <path d="M170 226h-46v276h48M124 292h50M158 285v-30q4-25 14-30 10 5 14 30v30M150 280h40v12h-40zM158 292h28v20h-28zM158 316v18M186 316v18M158 322h28M186 290h14v16h-14M186 254l16-16M188 270l14-16M186 288l20-12M176 388l16-18M168 215h12M173 210v15" />
        <path d="M164 262h16M162 270h20M166 250v30M178 250v30" />
        <path d="M166 316v175M178 316v175" strokeDasharray="9 3" strokeWidth="3" />
        <path d="M172 222v290" stroke={SHEET_BLUE} strokeWidth="7" strokeDasharray="14 3" />
        <Bars
          data={[
            [157, 188, 188], [164, 178, 194], [205, 208, 238], [205, 208, 254], [206, 216, 276], [193, 197, 370], [120, 126, 256, 4], [166, 176, 264, 14], [167, 179, 484, 8],
            [297, 321, 348, 5], [297, 516, 357, 6], [297, 450, 366, 6], [297, 504, 375, 6], [297, 450, 384, 6], [297, 410, 393, 6], [297, 516, 402, 6],
            [297, 414, 411, 6], [297, 391, 420, 6], [297, 358, 429, 6], [297, 441, 438, 6],
          ]}
        />

        <Sheet x={565} y={22} w={379} h={510} />
        <path d="M640 78h135v130H640zM720 88h-98v204h170M666 122h84M676 122v62q0 6 6 6h52q6 0 6-6v-62M655 63h8l28 50v50M755 63h-8l-24 45v60M720 88q6 4 4 14" />
        <path d={rows(678, 738, steps(130, 188, 7))} strokeDasharray="4 3" />
        <path d="M760 292l22-28h10M772 292l14-18h6M806 248v-10h97v179h-97v-12M682 380h98l8-8h6M682 400h98l8-8h6M866 292h22v14h-22M866 318h26v14h-26M866 346h26v14h-26M866 370h18v14h-18" />
        <path d={rows(793, 866, steps(250, 406, 9.2)) + cols(250, 405, [793, 829, 866])} />
        <path d="M815 252v150M848 252v150" strokeDasharray="7 6" strokeWidth="5" />
        <Bars data={[[639, 655, 63, 10], [759, 778, 62, 9], [685, 701, 105, 10], [690, 696, 105, 18], [722, 734, 172, 9], [642, 672, 288], [702, 732, 376], [702, 732, 395], [824, 834, 240], [714, 743, 438], [714, 855, 442, 3], [795, 877, 514, 9]]} />
      </g>

      <g transform="translate(685 500) scale(0.3333)">
        <Sheet x={19} y={22} w={724} h={510} />
        <rect x="92" y="74" width="177" height="176" rx="6" />
        <rect x="112" y="93" width="139" height="139" rx="5" />
        <rect x="119" y="99" width="126" height="127" />
        <path d="M92 250v22M269 250v22M92 270h177M269 74h28M269 250h28M294 74v176M341 93h80M341 93v179M341 232h80M421 73v176M428 73v176M434 73v176M434 93h28M434 232h28M455 93v139M462 93v179M341 270h121M444 98h46M444 226h46M487 98v128M404 48v14M398 62h12M72 152v12M62 162h18M415 222h7v28h-7z" />
        <path d="M101 341h165v128H101z" stroke={SHEET_BLUE} strokeWidth="5" strokeDasharray="12 5" />
        <path d="M94 84h14M101 77v14M252 84h14M259 77v14M94 241h14M101 234v14M252 241h14M259 234v14M414 83h26M408 241h30" stroke={SHEET_BLUE} strokeWidth="4" />
        <path d="M275 341h20M275 469h20M294 341v128M101 475v30M266 475v30M101 501h165M268 472l14 18h6" />
        <path d="M97 341h8M101 337v8M262 341h8M266 337v8M97 468h8M101 464v8M262 468h8M266 464v8" strokeWidth="4" />
        <Bars data={[[309, 330, 40, 9], [102, 267, 301, 9], [286, 294, 160, 14], [477, 486, 160, 14], [286, 294, 403, 14], [178, 189, 495, 11], [176, 184, 265, 4], [396, 405, 262, 8], [286, 318, 489, 8], [320, 324, 490], [511, 543, 426, 11], [511, 654, 429, 6], [593, 672, 517, 10]]} />

        <Sheet x={778} y={172} w={256} h={360} narrow />
        <circle cx="914" cy="315" r="62" strokeWidth="4" />
        <circle cx="914" cy="315" r="20" strokeWidth="4" />
        <path d="M853 205h124v9H853zM840 210h14M853 214v10M977 214v10M853 222h124M884 341l50-42M850 372l22-18M852 358l10 8" />
        <path d="M856 210h40M936 210h40" strokeWidth="7" />
        <path d="M914 202v188M840 314h150" stroke={SHEET_BLUE} strokeWidth="5" strokeDasharray="20 6 6 6" />
        <path d={rows(814, 886, [397, 416, 430, 445]) + cols(397, 445, [814, 838, 862, 886])} strokeWidth="4" />
        <path d={rows(990, 1028, [380, 400, 430, 456]) + cols(380, 456, [990, 996, 1003, 1012, 1020])} />
        <Bars data={[[998, 1019, 191, 6], [1003, 1014, 187, 10], [821, 831, 406], [846, 857, 406], [868, 882, 406, 8], [824, 829, 422], [845, 857, 422, 7], [868, 882, 422, 7], [824, 829, 438], [845, 857, 438, 7], [868, 882, 438, 7], [990, 1002, 442, 24]]} />
      </g>

      <g transform="translate(1030 550) scale(0.3333)">
        <Sheet x={33} y={22} w={257} h={360} narrow />
        <path d="M172 64h-22v144h22M158 64v60h14M168 58h10v64h-10zM178 66l14 6M167 124v80M176 124v80" />
        <path d="M171 60v152" stroke={SHEET_BLUE} strokeWidth="7" />
        <path d={rows(70, 144, [247, 266, 276, 286]) + cols(247, 286, [70, 94, 119, 144])} strokeWidth="4" />
        <path d={rows(247, 283, [230, 250, 280, 308]) + cols(230, 308, [247, 253, 260, 268, 276])} />
        <Bars data={[[253, 264, 38, 8], [266, 275, 42, 12], [177, 186, 55, 8], [77, 87, 256], [101, 113, 256], [124, 138, 254, 8], [81, 86, 271], [101, 114, 271, 7], [126, 138, 271, 7], [81, 86, 281], [101, 114, 281, 7], [126, 138, 281, 7], [160, 170, 160, 7], [166, 178, 186, 7], [248, 254, 268, 70], [262, 280, 294, 22]]} />

        <Sheet x={325} y={22} w={511} h={360} />
        <SpecTable />
        <Bars data={[[380, 513, 85, 4], [375, 522, 105, 7], [570, 588, 105], [660, 706, 105], [713, 729, 105], [744, 747, 105], [771, 774, 105], [539, 615, 114, 6], [692, 767, 362, 7]]} />

        <Sheet x={869} y={22} w={511} h={360} stamp={false} />
        <g transform="translate(544 0)"><SpecTable /></g>
        <path d={rows(1147, 1375, [357, 366]) + cols(357, 376, [1147, 1163, 1180, 1196, 1212, 1230, 1360])} strokeWidth="5" />
        <Bars data={[[926, 1062, 87, 8], [920, 996, 105, 6], [920, 1038, 126, 6], [1092, 1101, 104], [1104, 1156, 104, 8], [1092, 1101, 124], [1104, 1158, 125, 8], [1113, 1146, 119, 6], [1260, 1269, 105], [1260, 1269, 125], [1288, 1291, 105], [1288, 1291, 125], [1312, 1320, 105], [1312, 1320, 125], [1362, 1373, 370, 8]]} />
      </g>

      <g strokeWidth="1.300" stroke="#222">
        <path d="M520.500 905v50H570M516 950.500h9v9h-9z" />
        <path d="M1487.500 956v45M1439 1003.500h45M1484.500 1000.500h6v6h-6z" />
      </g>
      <g className="font-['Lato',sans-serif]" fill="#222" stroke="none" fontSize="19" fontWeight="300" textAnchor="middle">
        <text x="528" y="901">Y</text>
        <text x="581" y="954">X</text>
      </g>
    </svg>
  )
}

function ViewCube() {
  return (
    <div className="absolute right-[18px] top-8 flex w-[130px] flex-col items-center text-[#a3a1a5]">
      <svg width="130" height="150" viewBox="-3 -8 130 150" fill="none">
        <circle cx="62" cy="67" r="55" stroke="#dedde0" strokeWidth="9" />
        <g fill="#d9d7da" stroke="#a9a8ab" strokeWidth="0.700" fontSize="19" textAnchor="middle">
          <text x="62" y="18">С</text>
          <text x="62" y="130">Ю</text>
          <text x="5" y="73">З</text>
          <text x="118" y="73">В</text>
        </g>
        <rect x="36.500" y="40.500" width="51" height="51" fill="#e3e3e3" stroke="#949496" />
        <rect x="46" y="50" width="32" height="32" fill="#dadcdf" />
        <text x="62" y="71" fontSize="14" fill="#8b8b8e" textAnchor="middle">Сверху</text>
      </svg>
      <button className="mt-2.5 flex items-center gap-1.5 rounded bg-[#dcdbe4] px-1 leading-[18px] text-[#858488]">
        МСК
        <svg width="9" height="6" viewBox="0 0 9 6" fill="none" stroke="#aaa8b0"><path d="M1 1h7L4.500 5z" /></svg>
      </button>
    </div>
  )
}

function NavBar() {
  return (
    <div className="absolute right-[3px] top-[234px] rounded-md border-2 border-[#aeacb0] bg-[#d9d7da]/50">
      <svg width="31" height="211" viewBox="0 0 31 211" fill="none" stroke="#b9b7bb" strokeWidth="1.100">
        <circle cx="25" cy="5" r="3" />
        <path d="M23.500 3.500l3 3M26.500 3.500l-3 3" />
        <path d="M16 19h10v11a10.500 10.500 0 1 1-10-11z" />
        <circle cx="16" cy="30" r="6" />
        <path d="M9 36l3-2M23 36l-3-2M9 23l3 3M23 23l-3 3" />
        <path d="M14 49h6l-3 3zM14 119h6l-3 3z" fill="#b3b1b5" stroke="none" />
        <path d="M2 56h27" />
        <path d="M11 82c-2-4-5-7-7-8 2-2 5 0 6 2l-1-11c1-2 3-1 3 1l1 6V62c1-2 3-1 3 0v10l2-10c1-1 3 0 2 2l-1 9 4-6c2-1 3 0 2 2l-4 10-3 4z" />
        <path d="M4 89l16 15M19 90L5 104M4 94v-5h5M15 89h5v5M4 99v5h5" strokeWidth="1.500" />
        <circle cx="20" cy="104" r="4" />
        <path d="M23 107l4 4" strokeWidth="3" />
        <path d="M16 126v30M12 131l4-5 4 5M9 137h14l5 5-5 5H9a5 5 0 0 1 0-10" />
        <path d="M7 167h17v11H7zM12 167v11M19 167v11M11 183h12v10H11zM22 202h5v4h-5z" />
      </svg>
    </div>
  )
}

/* ---------- status bar ---------- */

function Block({ children }: { children: ReactNode }) {
  return <div className="flex h-6 items-center gap-0.5 bg-[#3d4553] px-px">{children}</div>
}

function Status({ name, on = false, children }: { name: string; on?: boolean; children: ReactNode }) {
  return (
    <button aria-label={name} aria-pressed={on} className={`flex h-[22px] w-[22px] items-center justify-center ${on ? 'bg-[#5a8bc3]' : ''}`}>
      <Ico>{children}</Ico>
    </button>
  )
}

function StatusCaret({ name }: { name: string }) {
  return <button aria-label={name} className="flex w-3 justify-center"><Caret big /></button>
}

function Compass() {
  return <path d="M9 1l2 7 5 8-5-2.500H7L2 16l5-8z" fill="#e4e6e9" stroke="none" />
}

function StatusBar() {
  return (
    <footer className="flex h-[29px] justify-between">
      <div className="flex gap-px pl-3 text-[#9ca3ac]">
        <button className="h-[18px] w-[68px] rounded-b-lg bg-[#3d4553] font-bold text-[#f1f2f4]">Модель</button>
        <button className="h-[18px] w-16 rounded-b-lg bg-[#2f3742]">Layout1</button>
        <button className="h-[18px] w-16 rounded-b-lg bg-[#2f3742]">Layout2</button>
        <button aria-label="Новый лист" className="ml-1 flex h-[17px] w-[22px] items-center justify-center rounded-b-lg bg-[#2f3742]">
          <svg width="9" height="9" viewBox="0 0 9 9" stroke="#b0b5bc" strokeWidth="1.800"><path d="M4.500 0v9M0 4.500h9" /></svg>
        </button>
      </div>
      <div className="flex items-center gap-0.5 pr-0.5 text-[12px]">
        <Block><button className="w-[56px] text-center text-[#eceef0]">МОДЕЛЬ</button></Block>
        <Block>
          <Status name="Сетка"><path d="M5 1v16M9 1v16M13 1v16M1 5h16M1 9h16M1 13h16" /></Status>
          <Status name="Привязка"><path d="M2 3h14M2 9h14M2 15h14" strokeWidth="2" strokeDasharray="2 4" /></Status>
          <StatusCaret name="Параметры привязки" />
        </Block>
        <Block>
          <Status name="Орто"><path d="M3 1v15h14M3 10h6v6" /></Status>
          <Status name="Полярное отслеживание" on><circle cx="8" cy="10" r="6.500" /><path d="M8 10h9M8 10l7-8M12 6q2 2 1 6" /></Status>
          <StatusCaret name="Углы" />
          <Status name="Изометрия"><path d="M2 2l14 14" stroke="#d8666c" /><path d="M9 1v16" stroke="#63c98a" /><path d="M8 7h2v4H8z" fill="#ddd" stroke="none" /></Status>
          <StatusCaret name="Изоплоскость" />
        </Block>
        <Block>
          <Status name="Отслеживание" on><path d="M17 15H2L15 3M9 8l3 4" strokeWidth="1.500" /></Status>
          <Status name="Объектная привязка" on><path d="M5 4h11v12H3V7" strokeWidth="1.500" /><path d="M1 2h4v4H1z" /></Status>
          <StatusCaret name="Режимы привязки" />
        </Block>
        <Block>
          <Status name="Вес линий" on><path d="M1 2h16" /><path d="M1 6h16" strokeWidth="2" /><path d="M1 10h7M10 10h7" strokeWidth="3" /><path d="M1 15h11" strokeWidth="3" /></Status>
        </Block>
        <Block>
          <Status name="Аннотативные объекты" on><Compass /><circle cx="14" cy="4" r="2.500" /></Status>
          <Status name="Автомасштаб"><Compass /><path d="M15 0l-3 5h3l-2 4 5-6h-3l2-3z" fill="#e4e6e9" stroke="none" /></Status>
          <Status name="Масштаб аннотаций"><Compass /></Status>
          <button className="flex h-[22px] items-center gap-1 px-1">1:1 <Caret big /></button>
        </Block>
        <Block>
          <Status name="Рабочее пространство"><circle cx="9" cy="9" r="4.500" strokeWidth="3.500" /><circle cx="9" cy="9" r="7" strokeWidth="2.500" strokeDasharray="2.750 2.750" /></Status>
          <StatusCaret name="Пространства" />
        </Block>
        <Block><Status name="Монитор аннотаций"><path d="M9 1v16M1 9h16" strokeWidth="2" /></Status></Block>
        <Block><Status name="Изолировать объекты"><path d="M2 2h6v6H2z" /><circle cx="14" cy="7" r="3" /><path d="M8 10l3.500 6h-7z" /></Status></Block>
        <Block>
          <Status name="Аппаратное ускорение"><path d="M4 1h9l4 5v8H4z" fill="#397cc0" stroke="none" /><path d="M7 2v9M3 5h10" /><path d="M1 11h5v5H1z" fill="#f1b630" stroke="none" /><path d="M7 11l4 4 6-7" stroke="#58b35b" strokeWidth="3" /></Status>
          <Status name="Подложки"><path d="M2 1h13v11H2z" fill="#eee" stroke="none" /><path d="M3 9l3-5 4 4 3-5" stroke="#3176b8" strokeWidth="1.500" /><path d="M12 7l5 10H7z" fill="#e8863a" stroke="none" /><path d="M12 10v4" stroke="#fff" /></Status>
        </Block>
        <Block>
          <Status name="Очистить экран"><path d="M1.500 3.500h15v11h-15zM5 12l3-3M5 10v2h2M13 6l-3 3M11 6h2v2" /></Status>
          <Status name="Адаптация"><path d="M1 3h16M1 9h16M1 15h16" strokeWidth="2" /></Status>
        </Block>
      </div>
    </footer>
  )
}

export default function App() {
  return (
    <div className="flex min-h-screen flex-col bg-[#222a33] font-['Noto_Sans','Open_Sans',sans-serif] text-[11px] leading-4 text-[#dfe2e6]">
      <Header />
      <div className="flex grow flex-col border-x-4 border-b-4 border-[#3a4553]">
        <div className="-mx-1 flex flex-col bg-[#222a33]"><Ribbon /></div>
        <FileTabs />
        <main className="relative grow bg-[#d9d7da]">
          <Drawing />
          <div className="relative flex items-start justify-between pl-1 pr-2.5 pt-1.5 text-black">
            <span className="text-[12px]">[−][Сверху][2D-каркас]</span>
            <div className="flex gap-1.5">
              <button aria-label="Свернуть чертеж"><svg width="14" height="14" viewBox="0 0 14 14" fill="#fff" stroke="#555"><path d="M1.500 8.500h11v4h-11z" /></svg></button>
              <button aria-label="Восстановить чертеж"><svg width="14" height="14" viewBox="0 0 14 14" fill="#fff" stroke="#555"><path d="M4.500 1.500h8v8h-8zM1.500 4.500h9v8h-9zM4.500 7.500h3v3h-3z" /></svg></button>
              <button aria-label="Закрыть чертеж"><svg width="14" height="14" viewBox="0 0 14 14" fill="none" stroke="#555"><path d="M3 3l8 8M11 3l-8 8" strokeWidth="4" /><path d="M3 3l8 8M11 3l-8 8" stroke="#fff" strokeWidth="1.500" /></svg></button>
            </div>
          </div>
          <ViewCube />
          <NavBar />
        </main>
        <StatusBar />
      </div>
    </div>
  )
}
